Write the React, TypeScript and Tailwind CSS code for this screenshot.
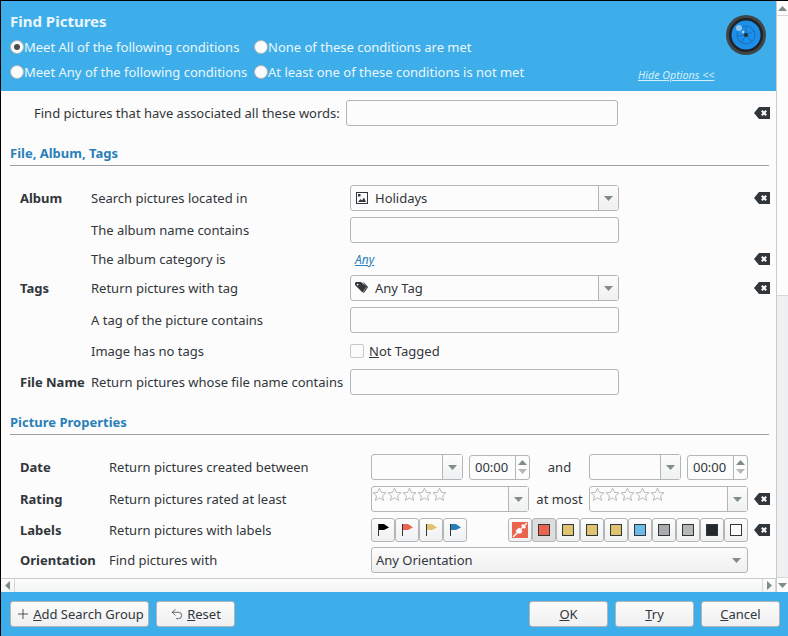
import { ReactNode } from "react";
import { Plus, Undo2 } from "lucide-react";

const FONT = "font-['Noto_Sans',sans-serif]";

function Caret({ up = false, light = false }: { up?: boolean; light?: boolean }) {
  return (
    <svg width="9" height="5" viewBox="0 0 9 5" className={up ? "rotate-180" : ""}>
      <path d="M0 0h9L4.5 5z" fill={light ? "#b4b6b8" : "#7f8c8d"} />
    </svg>
  );
}

function ClearIcon() {
  return (
    <svg width="16" height="12" viewBox="0 0 16 12" className="shrink-0">
      <path d="M5 0h11v12H5L0 6z" fill="#31363b" />
      <path d="M7.8 3.8l4.4 4.4M12.2 3.8L7.8 8.2" stroke="#fcfcfc" strokeWidth="2" />
    </svg>
  );
}

function PictureIcon() {
  return (
    <svg width="12" height="12" viewBox="0 0 12 12" className="mr-[7px] ml-[5px] shrink-0">
      <rect x="0.5" y="0.5" width="11" height="11" fill="none" stroke="#31363b" />
      <rect x="2" y="2" width="2.5" height="2.5" fill="#31363b" />
      <path d="M2 10l2.5-3L6 8.5 8 5.5l2 4.5z" fill="#31363b" />
    </svg>
  );
}

function TagsIcon() {
  return (
    <svg width="13" height="12" viewBox="0 0 13 12" className="mr-[7px] ml-[4px] shrink-0">
      <path d="M0 3V1l1-1h5l5.5 4.5L7.5 10.5z" fill="#31363b" />
      <path d="M8 0.5h1L13 5l-4 6-1-.5 3.5-5.5z" fill="#31363b" />
      <circle cx="2.6" cy="2.6" r="0.9" fill="#fcfcfc" />
    </svg>
  );
}

function TextBox({ className = "" }: { className?: string }) {
  return <div className={`h-[26px] rounded-[3px] border border-[#b3b5b6] bg-[#fcfcfc] ${className}`} />;
}

function Combo({
  children,
  className = "",
  arrowWidth = "w-[20px]",
}: {
  children?: ReactNode;
  className?: string;
  arrowWidth?: string;
}) {
  return (
    <div className={`flex h-[26px] rounded-[3px] border border-[#b3b5b6] bg-[#fcfcfc] ${className}`}>
      <div className="flex min-w-0 flex-1 items-center overflow-hidden">{children}</div>
      <div className={`flex ${arrowWidth} items-center justify-center border-l border-[#b3b5b6] bg-gradient-to-b from-[#fcfcfc] to-[#eff0f1]`}>
        <Caret />
      </div>
    </div>
  );
}

function TimeBox() {
  return (
    <div className="flex h-[25px] w-[61px] rounded-[3px] border border-[#b3b5b6] bg-[#fcfcfc]">
      <div className="flex flex-1 items-center pl-[5px]">00:00</div>
      <div className="flex w-[14px] flex-col items-center justify-center gap-[4px] border-l border-[#b3b5b6]">
        <Caret up />
        <Caret light />
      </div>
    </div>
  );
}

function Stars() {
  return (
    <svg width="76" height="15" viewBox="0 0 76 15" className="mb-[9px] self-start">
      {[0, 15, 30, 45, 60].map((x) => (
        <path
          key={x}
          transform={`translate(${x} 0)`}
          d="M7.5 1l1.9 4.4 4.6.4-3.5 3 1.1 4.6-4.1-2.5-4.1 2.5 1.1-4.6-3.5-3 4.6-.4z"
          fill="#fcfcfc"
          stroke="#b9bbbd"
        />
      ))}
    </svg>
  );
}

function Flag({ color }: { color: string }) {
  return (
    <div className="flex h-[24px] w-[24px] items-center justify-center rounded-[3px] border border-[#b3b5b6] bg-gradient-to-b from-[#fcfcfc] to-[#eff0f1]">
      <svg width="13" height="14" viewBox="0 0 13 14">
        <path d="M1.5 1v12" stroke="#31363b" strokeWidth="1" />
        <path d="M2 1h5l5 3.5L7 7H2z" fill={color} />
      </svg>
    </div>
  );
}

function Swatch({ color, active = false }: { color: string; active?: boolean }) {
  return (
    <div
      className={`flex h-[24px] w-[24px] items-center justify-center rounded-[3px] border border-[#b3b5b6] ${
        active ? "bg-[#dcdddd]" : "bg-gradient-to-b from-[#fcfcfc] to-[#eff0f1]"
      }`}
    >
      <div className="h-[12px] w-[12px] border border-[#31363b]" style={{ backgroundColor: color }} />
    </div>
  );
}

function NoColor() {
  return (
    <div className="flex h-[24px] w-[24px] items-center justify-center rounded-[3px] border border-[#b3b5b6] bg-gradient-to-b from-[#fcfcfc] to-[#eff0f1]">
      <svg width="16" height="16" viewBox="0 0 16 16">
        <rect width="16" height="16" fill="#e9654f" />
        <path d="M1 15L15 1" stroke="#fcfcfc" strokeWidth="1.5" />
        <path d="M3.5 9l3.5-3.5 3.5 3.5-1.5 2.5h-3z" fill="#fcfcfc" />
        <path d="M9 3.5l2-1.5 3 3-1.5 2z" fill="#fcfcfc" />
      </svg>
    </div>
  );
}

function Section({ title, top }: { title: string; top: string }) {
  return (
    <div className={`${top} mr-[7px] ml-[9px] h-[19px] border-b border-[#a0a2a4] text-[13px] leading-[13px] font-bold text-[#2980b9]`}>
      {title}
    </div>
  );
}

// label / description / control / clear
function Row({
  label,
  text,
  children,
  clear = false,
  height = "h-[26px]",
  top = "mt-[6px]",
  labelWidth = "w-[71px]",
  textWidth = "w-[259px]",
  controlWidth = "w-[269px]",
}: {
  label?: string;
  text: string;
  children?: ReactNode;
  clear?: boolean;
  height?: string;
  top?: string;
  labelWidth?: string;
  textWidth?: string;
  controlWidth?: string;
}) {
  return (
    <div className={`flex ${height} ${top} items-center pl-[19px]`}>
      <div className={`${labelWidth} shrink-0 font-bold`}>{label}</div>
      <div className={`${textWidth} shrink-0`}>{text}</div>
      <div className={`${controlWidth} shrink-0`}>{children}</div>
      {clear && (
        <div className="mr-[6px] ml-auto">
          <ClearIcon />
        </div>
      )}
    </div>
  );
}

function Radio({ label, checked = false, width }: { label: string; checked?: boolean; width: string }) {
  return (
    <div className={`flex ${width} items-center`}>
      <div className="flex h-[14px] w-[14px] shrink-0 items-center justify-center rounded-full border border-[#b3b5b6] bg-[#fcfcfc]">
        {checked && <div className="h-[6px] w-[6px] rounded-full bg-[#4d4d4d]" />}
      </div>
      <span className="text-[#eaf6fd]">{label}</span>
    </div>
  );
}

function Logo() {
  return (
    <svg width="40" height="40" viewBox="0 0 40 40">
      <circle cx="20" cy="20" r="20" fill="#3f4549" />
      <circle cx="20" cy="20" r="17" fill="#1f2326" />
      <circle cx="20" cy="20" r="14.5" fill="#1d8fe8" />
      <g stroke="#1668ad" strokeWidth="0.8" fill="none">
        <circle cx="20" cy="20" r="9" />
        <path d="M20 20L20 11M20 20L28 16M20 20L26 27M20 20L15 28M20 20L11 21M20 20L14 13" />
      </g>
      <circle cx="20" cy="20" r="2" fill="#263238" />
      <circle cx="13" cy="13" r="3" fill="#8fc8f2" />
      <circle cx="17" cy="17" r="1.3" fill="#b5dcf7" />
    </svg>
  );
}

function Btn({ children, width }: { children: ReactNode; width: string }) {
  return (
    <div className={`flex h-[26px] ${width} items-center justify-center rounded-[3px] border border-[#b3b5b6] bg-gradient-to-b from-[#fcfcfc] to-[#eff0f1]`}>
      {children}
    </div>
  );
}

function VScrollbar() {
  return (
    <div className="flex w-[12px] flex-col border-l border-[#c8cacb] bg-[#eff0f1]">
      <div className="flex h-[15px] items-center justify-center border-b border-[#d5d7d8] bg-[#fcfcfc]">
        <Caret up />
      </div>
      <div className="h-[280px] border-b border-[#d5d7d8] bg-[#fcfcfc]" />
      <div className="flex-1" />
      <div className="flex h-[15px] items-center justify-center border-t border-[#d5d7d8] bg-[#fcfcfc]">
        <Caret />
      </div>
    </div>
  );
}

function HScrollbar() {
  return (
    <div className="flex h-[14px] border-t border-[#c8cacb] bg-gradient-to-b from-[#fcfcfc] to-[#f3f4f4]">
      <div className="flex w-[14px] items-center justify-center border-r border-[#d5d7d8]">
        <svg width="5" height="9" viewBox="0 0 5 9">
          <path d="M5 0v9L0 4.5z" fill="#7f8c8d" />
        </svg>
      </div>
      <div className="flex-1" />
      <div className="flex w-[14px] items-center justify-center border-x border-[#d5d7d8]">
        <svg width="5" height="9" viewBox="0 0 5 9">
          <path d="M0 0v9l5-4.5z" fill="#7f8c8d" />
        </svg>
      </div>
    </div>
  );
}

export default function App() {
  return (
    <div className={`${FONT} flex h-[636px] w-[788px] flex-col overflow-hidden border-t border-l border-black bg-[#fcfcfc] text-[13px] leading-[18px] text-[#31363b]`}>
      <div className="flex min-h-0 flex-1">
        <div className="flex min-w-0 flex-1 flex-col">
          <header className="relative h-[90px] shrink-0 bg-[#3daee9] pl-[9px]">
            <h1 className="pt-[10px] text-[15px] leading-[20px] font-bold text-[#eaf6fd]">Find Pictures</h1>
            <div className="mt-[3px] flex h-[25px] items-center">
              <Radio label="Meet All of the following conditions" checked width="w-[244px]" />
              <Radio label="None of these conditions are met" width="w-[270px]" />
            </div>
            <div className="flex h-[25px] items-center">
              <Radio label="Meet Any of the following conditions" width="w-[244px]" />
              <Radio label="At least one of these conditions is not met" width="w-[300px]" />
            </div>
            <div className="absolute top-[14px] left-[725px]">
              <Logo />
            </div>
            <a className="absolute top-[66px] left-[637px] text-[10.7px] leading-[16px] text-[#d5eefb] italic underline">
              Hide Options &lt;&lt;
            </a>
          </header>

          <main className="min-h-0 flex-1 overflow-hidden">
            <div className="mt-[9px] flex h-[26px] items-center pl-[33px]">
              <div className="w-[312px] shrink-0">Find pictures that have associated all these words:</div>
              <TextBox className="w-[272px]" />
              <div className="mr-[6px] ml-auto">
                <ClearIcon />
              </div>
            </div>

            <Section title="File, Album, Tags" top="mt-[21px]" />

            <Row label="Album" text="Search pictures located in" clear top="mt-[19px]">
              <Combo>
                <PictureIcon />
                Holidays
              </Combo>
            </Row>
            <Row text="The album name contains">
              <TextBox />
            </Row>
            <Row text="The album category is" clear top="mt-[3px]">
              <a className="pl-[5px] text-[12px] text-[#2980b9] italic underline">Any</a>
            </Row>
            <Row label="Tags" text="Return pictures with tag" clear top="mt-[3px]">
              <Combo>
                <TagsIcon />
                Any Tag
              </Combo>
            </Row>
            <Row text="A tag of the picture contains">
              <TextBox />
            </Row>
            <Row text="Image has no tags" top="mt-[5px]">
              <div className="flex items-center gap-[5px]">
                <div className="h-[14px] w-[14px] rounded-[2px] border border-[#c6c8c9]" />
                <span>
                  <u>N</u>ot Tagged
                </span>
              </div>
            </Row>
            <Row label="File Name" text="Return pictures whose file name contains" top="mt-[5px]">
              <TextBox />
            </Row>

            <Section title="Picture Properties" top="mt-[21px]" />

            <Row
              label="Date"
              text="Return pictures created between"
              top="mt-[19px]"
              labelWidth="w-[89px]"
              textWidth="w-[262px]"
              controlWidth="w-[377px]"
            >
              <div className="flex items-center">
                <Combo className="w-[92px]" />
                <div className="ml-[6px]">
                  <TimeBox />
                </div>
                <div className="w-[59px] text-center">and</div>
                <Combo className="w-[92px]" />
                <div className="ml-[6px]">
                  <TimeBox />
                </div>
              </div>
            </Row>
            <Row
              label="Rating"
              text="Return pictures rated at least"
              clear
              labelWidth="w-[89px]"
              textWidth="w-[262px]"
              controlWidth="w-[377px]"
            >
              <div className="flex items-center">
                <Combo className="w-[158px]">
                  <Stars />
                </Combo>
                <div className="w-[60px] pl-[1px] text-center">at most</div>
                <Combo className="w-[159px]">
                  <Stars />
                </Combo>
              </div>
            </Row>
            <Row
              label="Labels"
              text="Return pictures with labels"
              clear
              height="h-[24px]"
              labelWidth="w-[89px]"
              textWidth="w-[262px]"
              controlWidth="w-[377px]"
            >
              <div className="flex items-center">
                <Flag color="#000000" />
                <Flag color="#e9654f" />
                <Flag color="#dfc36f" />
                <Flag color="#2980b9" />
                <div className="w-[41px]" />
                <NoColor />
                <Swatch color="#e9654f" active />
                <Swatch color="#dfc36f" />
                <Swatch color="#dfc36f" />
                <Swatch color="#dfc36f" />
                <Swatch color="#6cb9eb" />
                <Swatch color="#a9abac" />
                <Swatch color="#b5b6b6" />
                <Swatch color="#23282b" />
                <Swatch color="#fcfcfc" />
              </div>
            </Row>
            <Row
              label="Orientation"
              text="Find pictures with"
              top="mt-[5px]"
              labelWidth="w-[89px]"
              textWidth="w-[262px]"
              controlWidth="w-[377px]"
            >
              <div className="flex h-[26px] items-center justify-between rounded-[3px] border border-[#b3b5b6] bg-gradient-to-b from-[#fcfcfc] to-[#eff0f1] pr-[6px] pl-[4px]">
                Any Orientation
                <Caret />
              </div>
            </Row>
          </main>

          <HScrollbar />
        </div>
        <VScrollbar />
      </div>

      <footer className="flex h-[44px] shrink-0 items-center bg-[#3daee9] pr-[8px] pl-[9px]">
        <Btn width="w-[139px]">
          <Plus size={16} strokeWidth={1.25} className="mr-[2px]" />
          <span>
            <u>A</u>dd Search Group
          </span>
        </Btn>
        <div className="ml-[7px]">
          <Btn width="w-[79px]">
            <Undo2 size={14} strokeWidth={1.25} className="mr-[3px]" />
            <span>
              <u>R</u>eset
            </span>
          </Btn>
        </div>
        <div className="ml-auto flex gap-[7px]">
          <Btn width="w-[79px]">
            <span>
              <u>O</u>K
            </span>
          </Btn>
          <Btn width="w-[79px]">
            <span>
              <u>T</u>ry
            </span>
          </Btn>
          <Btn width="w-[79px]">
            <span>
              <u>C</u>ancel
            </span>
          </Btn>
        </div>
      </footer>
    </div>
  );
}
